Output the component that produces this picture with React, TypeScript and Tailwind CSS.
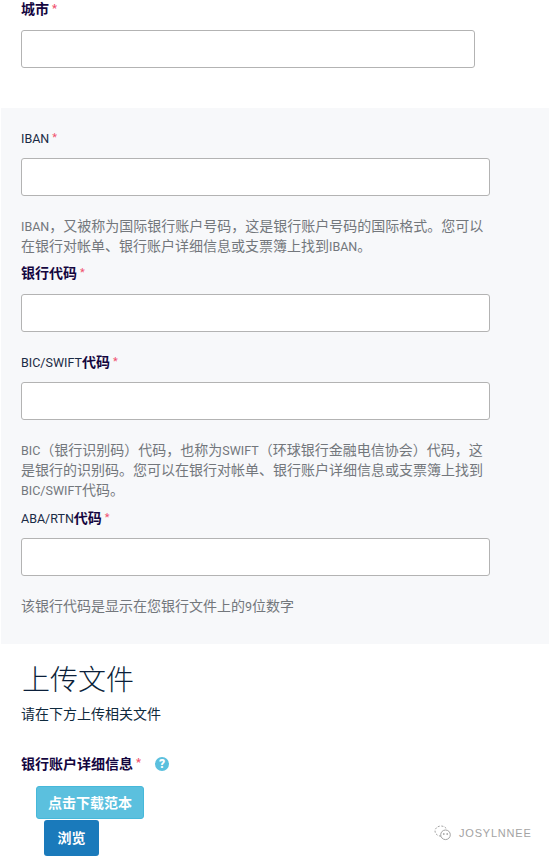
const FONT = "font-['Roboto','Noto_Sans_CJK_SC',sans-serif]";

function Star() {
  return <span className="ml-[3px] text-[11px] leading-none text-[#f0506e] relative -top-[2px]">*</span>;
}

function Field({ w = "w-[469px]" }: { w?: string }) {
  return (
    <input
      type="text"
      className={`block h-[38px] ${w} rounded-[3px] border border-[#b3b3b3] bg-white`}
    />
  );
}

function L({ children }: { children: React.ReactNode }) {
  return <span className="text-[12.5px] leading-none">{children}</span>;
}

function Label({ latin, cjk, className = "" }: { latin?: string; cjk?: string; className?: string }) {
  return (
    <div className={`h-5 text-sm leading-5 text-[#1a2b45] whitespace-nowrap ${className}`}>
      {latin ? <L>{latin}</L> : null}
      {cjk ? <span className="font-bold text-[#14063f]">{cjk}</span> : null}
      <Star />
    </div>
  );
}

function Help({ children, className = "" }: { children: React.ReactNode; className?: string }) {
  return <p className={`w-[469px] text-sm leading-5 text-[#73777c] whitespace-nowrap ${className}`}>{children}</p>;
}

export default function App() {
  return (
    <div className={`relative h-[856px] w-[549px] overflow-hidden bg-white ${FONT}`}>
      <div className="pl-[21px]">
        <div className="h-[18px] text-sm leading-[18px] font-bold text-[#14063f] whitespace-nowrap">
          城市
          <Star />
        </div>
        <div className="mt-3">
          <Field w="w-[454px]" />
        </div>
      </div>

      <section className="mt-10 ml-px bg-[#f7f8fa] pl-5 pt-5 pb-7">
        <Label latin="IBAN" />
        <div className="mt-[10px]">
          <Field />
        </div>
        <Help className="mt-5">
          <L>IBAN</L>，又被称为国际银行账户号码，这是银行账户号码的国际格式。您可以
          <br />
          在银行对帐单、银行账户详细信息或支票簿上找到<L>IBAN</L>。
        </Help>

        <Label cjk="银行代码" className="mt-[7px]" />
        <div className="mt-[11px]">
          <Field />
        </div>

        <Label latin="BIC/SWIFT" cjk="代码" className="mt-5" />
        <div className="mt-[10px]">
          <Field />
        </div>
        <Help className="mt-5">
          <L>BIC</L>（银行识别码）代码，也称为<L>SWIFT</L>（环球银行金融电信协会）代码，这
          <br />
          是银行的识别码。您可以在银行对帐单、银行账户详细信息或支票簿上找到
          <br />
          <L>BIC/SWIFT</L>代码。
        </Help>

        <Label latin="ABA/RTN" cjk="代码" className="mt-2" />
        <div className="mt-[10px]">
          <Field />
        </div>
        <Help className="mt-5">
          该银行代码是显示在您银行文件上的<L>9</L>位数字
        </Help>
      </section>

      <div className="pl-[22px]">
        <h2 className="mt-[17px] h-10 text-[28px] leading-10 font-light text-[#0b1f3a]">上传文件</h2>
        <p className="-ml-px mt-[3px] h-5 text-sm leading-5 text-[#0f2a3d]">请在下方上传相关文件</p>

        <div className="-ml-px mt-[30px] flex h-5 items-center text-sm leading-5 font-bold text-[#14063f]">
          银行账户详细信息
          <Star />
          <span className="ml-[14px] flex h-[14px] w-[14px] items-center justify-center rounded-full bg-[#5bc0de] text-[12px] font-black leading-none text-white">
            ?
          </span>
        </div>

        <button className="mt-3 ml-[14px] block h-[33px] w-[108px] rounded-[3px] border border-[#46b8da] bg-[#5bc0de] text-sm font-bold text-white">
          点击下载范本
        </button>
        <button className="mt-px ml-[22px] block h-9 w-[55px] rounded-[3px] bg-[#1a7abb] text-sm font-bold text-white">
          浏览
        </button>
      </div>

      <div className="absolute left-[434px] top-[825px] flex items-center gap-[7px] text-[#a3a3a3]">
        <svg width="18" height="16" viewBox="0 0 18 16" fill="none" stroke="currentColor" strokeWidth="1">
          <path d="M7 11.2C3.8 11 1 9 1 6c0-2.8 2.7-5 6-5 2.8 0 5.2 1.5 5.8 3.7" strokeDasharray="2 1.5" />
          <circle cx="11.5" cy="9.8" r="4.8" />
          <circle cx="9.8" cy="9" r="0.5" fill="currentColor" />
          <circle cx="13.2" cy="9" r="0.5" fill="currentColor" />
        </svg>
        <span className="text-[11px] leading-4 tracking-[0.8px] font-['Liberation_Sans',sans-serif]">JOSYLNNEE</span>
      </div>
    </div>
  );
}
